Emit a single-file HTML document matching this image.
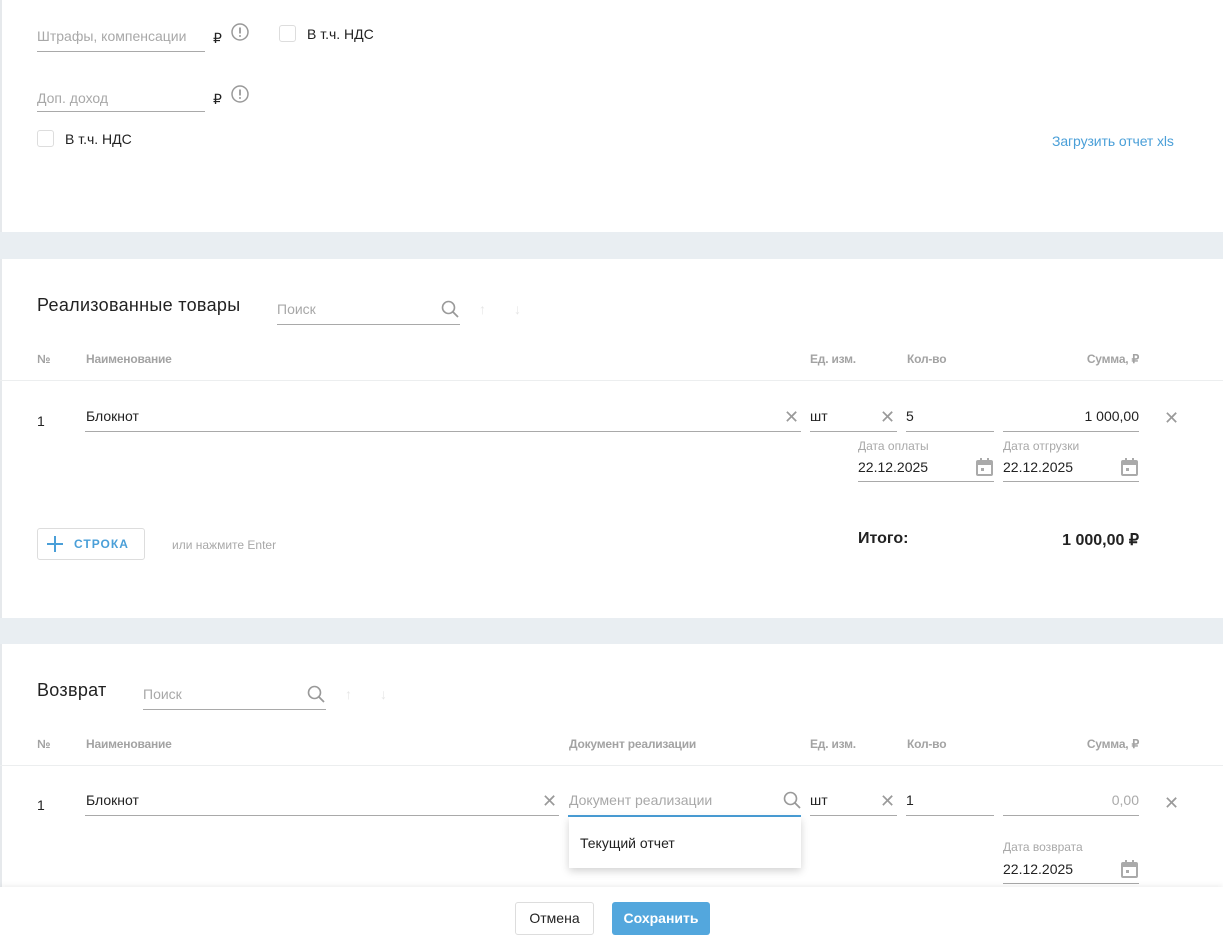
<!DOCTYPE html>
<html><head><meta charset="utf-8">
<style>
*{box-sizing:border-box;margin:0;padding:0}
body{width:1223px;height:942px;overflow:hidden;background:#fff;font-family:"Liberation Sans","Noto Sans CJK SC",sans-serif;position:relative;color:#222}
.a{position:absolute}
.band{position:absolute;left:0;width:1223px;background:#e9eef2}
.ln{position:absolute;height:1px;background:#a9a9a9}
.ph{position:absolute;color:#a8a8a8;font-size:14px}
.t{position:absolute;font-size:14px;color:#222}
.hd{position:absolute;font-size:12px;color:#a3a3a3;font-weight:bold;letter-spacing:-0.2px}
.x{position:absolute;color:#9a9a9a;font-size:18px;line-height:18px}
.cb{position:absolute;width:17px;height:17px;border:1px solid #ddd;border-radius:3px}
.lbl{position:absolute;font-size:12px;color:#a8a8a8}
</style></head><body>
<div class="a" style="left:0;top:0;width:2px;height:942px;background:#e6e9ec"></div>

<div class="ph" style="left:37px;top:28px">Штрафы, компенсации</div>
<div class="ln" style="left:37px;top:51px;width:168px"></div>
<div class="t" style="left:213px;top:30px">₽</div>
<svg class="a" style="left:231px;top:23px" width="18" height="18" viewBox="0 0 18 18"><circle cx="9" cy="9" r="8" fill="none" stroke="#999" stroke-width="1.5"/><path d="M9 4.5v6" stroke="#999" stroke-width="1.8"/><circle cx="9" cy="13" r="1" fill="#999"/></svg>
<div class="cb" style="left:279px;top:25px"></div>
<div class="t" style="left:307px;top:26px">В т.ч. НДС</div>

<div class="ph" style="left:37px;top:90px">Доп. доход</div>
<div class="ln" style="left:37px;top:111px;width:168px"></div>
<div class="t" style="left:213px;top:91px">₽</div>
<svg class="a" style="left:231px;top:85px" width="18" height="18" viewBox="0 0 18 18"><circle cx="9" cy="9" r="8" fill="none" stroke="#999" stroke-width="1.5"/><path d="M9 4.5v6" stroke="#999" stroke-width="1.8"/><circle cx="9" cy="13" r="1" fill="#999"/></svg>
<div class="cb" style="left:37px;top:130px"></div>
<div class="t" style="left:65px;top:131px">В т.ч. НДС</div>
<div class="a" style="left:1052px;top:133px;font-size:14px;color:#4a9fd8;letter-spacing:-0.1px">Загрузить отчет xls</div>

<div class="band" style="top:232px;height:27px"></div>

<div class="a" style="left:37px;top:295px;font-size:18px;color:#222;letter-spacing:0.3px">Реализованные товары</div>
<div class="ph" style="left:277px;top:301px">Поиск</div>
<div class="ln" style="left:277px;top:324px;width:183px"></div>
<svg class="a" style="left:441px;top:300px" width="18" height="18" viewBox="0 0 18 18"><circle cx="7.5" cy="7.5" r="6" fill="none" stroke="#999" stroke-width="1.6"/><path d="M12 12l5 5" stroke="#999" stroke-width="1.8"/></svg>
<div class="a" style="left:479px;top:301px;color:#e6e6e6;font-size:14px">↑</div>
<div class="a" style="left:514px;top:301px;color:#e6e6e6;font-size:14px">↓</div>

<div class="hd" style="left:37px;top:352px">№</div>
<div class="hd" style="left:86px;top:352px">Наименование</div>
<div class="hd" style="left:810px;top:352px">Ед. изм.</div>
<div class="hd" style="left:907px;top:352px">Кол-во</div>
<div class="hd" style="left:1003px;top:352px;width:136px;text-align:right">Сумма, ₽</div>
<div class="a" style="left:0;top:380px;width:1223px;height:1px;background:#eceeef"></div>

<div class="t" style="left:37px;top:413px">1</div>
<div class="t" style="left:86px;top:408px">Блокнот</div>
<div class="ln" style="left:85px;top:431px;width:716px"></div>
<div class="x" style="left:784px;top:408px">✕</div>
<div class="t" style="left:810px;top:408px">шт</div>
<div class="ln" style="left:810px;top:431px;width:87px"></div>
<div class="x" style="left:880px;top:408px">✕</div>
<div class="t" style="left:906px;top:408px">5</div>
<div class="ln" style="left:906px;top:431px;width:88px"></div>
<div class="t" style="left:1003px;top:408px;width:136px;text-align:right">1 000,00</div>
<div class="ln" style="left:1003px;top:431px;width:136px"></div>
<div class="x" style="left:1164px;top:409px">✕</div>

<div class="lbl" style="left:858px;top:439px">Дата оплаты</div>
<div class="t" style="left:858px;top:459px">22.12.2025</div>
<div class="ln" style="left:858px;top:481px;width:136px"></div>
<svg class="a" style="left:976px;top:458px" width="17" height="18" viewBox="0 0 17 18"><rect x="1" y="3" width="15" height="14" rx="1" fill="none" stroke="#aaa" stroke-width="2"/><rect x="1" y="3" width="15" height="4" fill="#aaa"/><rect x="4" y="0" width="2" height="4" fill="#aaa"/><rect x="11" y="0" width="2" height="4" fill="#aaa"/><rect x="5" y="10" width="3" height="3" fill="#aaa"/></svg>
<div class="lbl" style="left:1003px;top:439px">Дата отгрузки</div>
<div class="t" style="left:1003px;top:459px">22.12.2025</div>
<div class="ln" style="left:1003px;top:481px;width:136px"></div>
<svg class="a" style="left:1121px;top:458px" width="17" height="18" viewBox="0 0 17 18"><rect x="1" y="3" width="15" height="14" rx="1" fill="none" stroke="#aaa" stroke-width="2"/><rect x="1" y="3" width="15" height="4" fill="#aaa"/><rect x="4" y="0" width="2" height="4" fill="#aaa"/><rect x="11" y="0" width="2" height="4" fill="#aaa"/><rect x="5" y="10" width="3" height="3" fill="#aaa"/></svg>

<div class="a" style="left:37px;top:528px;width:108px;height:32px;border:1px solid #ddd;border-radius:3px"></div>
<svg class="a" style="left:46px;top:535px" width="18" height="18" viewBox="0 0 18 18"><path d="M9 1v16M1 9h16" stroke="#4a9fd8" stroke-width="2"/></svg>
<div class="a" style="left:74px;top:537px;font-size:12px;font-weight:bold;color:#4a9fd8;letter-spacing:1px">СТРОКА</div>
<div class="a" style="left:172px;top:538px;font-size:12px;color:#a8a8a8">или нажмите Enter</div>
<div class="a" style="left:858px;top:530px;font-size:16px;font-weight:bold;color:#222">Итого:</div>
<div class="a" style="left:1003px;top:530px;width:136px;text-align:right;font-size:16px;font-weight:bold;color:#222">1 000,00 ₽</div>

<div class="band" style="top:618px;height:26px"></div>

<div class="a" style="left:37px;top:680px;font-size:18px;color:#222;letter-spacing:0.3px">Возврат</div>
<div class="ph" style="left:143px;top:686px">Поиск</div>
<div class="ln" style="left:143px;top:709px;width:183px"></div>
<svg class="a" style="left:307px;top:685px" width="18" height="18" viewBox="0 0 18 18"><circle cx="7.5" cy="7.5" r="6" fill="none" stroke="#999" stroke-width="1.6"/><path d="M12 12l5 5" stroke="#999" stroke-width="1.8"/></svg>
<div class="a" style="left:345px;top:686px;color:#e6e6e6;font-size:14px">↑</div>
<div class="a" style="left:380px;top:686px;color:#e6e6e6;font-size:14px">↓</div>

<div class="hd" style="left:37px;top:737px">№</div>
<div class="hd" style="left:86px;top:737px">Наименование</div>
<div class="hd" style="left:569px;top:737px">Документ реализации</div>
<div class="hd" style="left:810px;top:737px">Ед. изм.</div>
<div class="hd" style="left:907px;top:737px">Кол-во</div>
<div class="hd" style="left:1003px;top:737px;width:136px;text-align:right">Сумма, ₽</div>
<div class="a" style="left:0;top:765px;width:1223px;height:1px;background:#eceeef"></div>

<div class="t" style="left:37px;top:797px">1</div>
<div class="t" style="left:86px;top:792px">Блокнот</div>
<div class="ln" style="left:85px;top:815px;width:474px"></div>
<div class="x" style="left:542px;top:792px">✕</div>
<div class="ph" style="left:569px;top:792px">Документ реализации</div>
<div class="a" style="left:568px;top:815px;width:233px;height:2px;background:#4a9fd8"></div>
<svg class="a" style="left:783px;top:791px" width="18" height="18" viewBox="0 0 18 18"><circle cx="7.5" cy="7.5" r="6" fill="none" stroke="#999" stroke-width="1.6"/><path d="M12 12l5 5" stroke="#999" stroke-width="1.8"/></svg>
<div class="t" style="left:810px;top:792px">шт</div>
<div class="ln" style="left:810px;top:815px;width:87px"></div>
<div class="x" style="left:880px;top:792px">✕</div>
<div class="t" style="left:906px;top:792px">1</div>
<div class="ln" style="left:906px;top:815px;width:88px"></div>
<div class="t" style="left:1003px;top:792px;width:136px;text-align:right;color:#aaa">0,00</div>
<div class="ln" style="left:1003px;top:815px;width:136px"></div>
<div class="x" style="left:1164px;top:794px">✕</div>

<div class="a" style="left:569px;top:817px;width:232px;height:51px;background:#fff;box-shadow:0 3px 8px rgba(0,0,0,.18)"></div>
<div class="t" style="left:580px;top:835px">Текущий отчет</div>

<div class="lbl" style="left:1003px;top:840px">Дата возврата</div>
<div class="t" style="left:1003px;top:861px">22.12.2025</div>
<div class="ln" style="left:1003px;top:883px;width:136px"></div>
<svg class="a" style="left:1121px;top:860px" width="17" height="18" viewBox="0 0 17 18"><rect x="1" y="3" width="15" height="14" rx="1" fill="none" stroke="#aaa" stroke-width="2"/><rect x="1" y="3" width="15" height="4" fill="#aaa"/><rect x="4" y="0" width="2" height="4" fill="#aaa"/><rect x="11" y="0" width="2" height="4" fill="#aaa"/><rect x="5" y="10" width="3" height="3" fill="#aaa"/></svg>

<div class="a" style="left:0;top:887px;width:1223px;height:55px;background:#fff;box-shadow:0 -2px 5px rgba(0,0,0,.06)"></div>
<div class="a" style="left:515px;top:902px;width:79px;height:33px;border:1px solid #ddd;border-radius:3px;font-size:14px;line-height:31px;text-align:center;color:#222">Отмена</div>
<div class="a" style="left:612px;top:902px;width:98px;height:33px;background:#53a7dd;border-radius:3px;font-size:14px;line-height:33px;text-align:center;color:#fff;font-weight:bold">Сохранить</div>
</body></html>
